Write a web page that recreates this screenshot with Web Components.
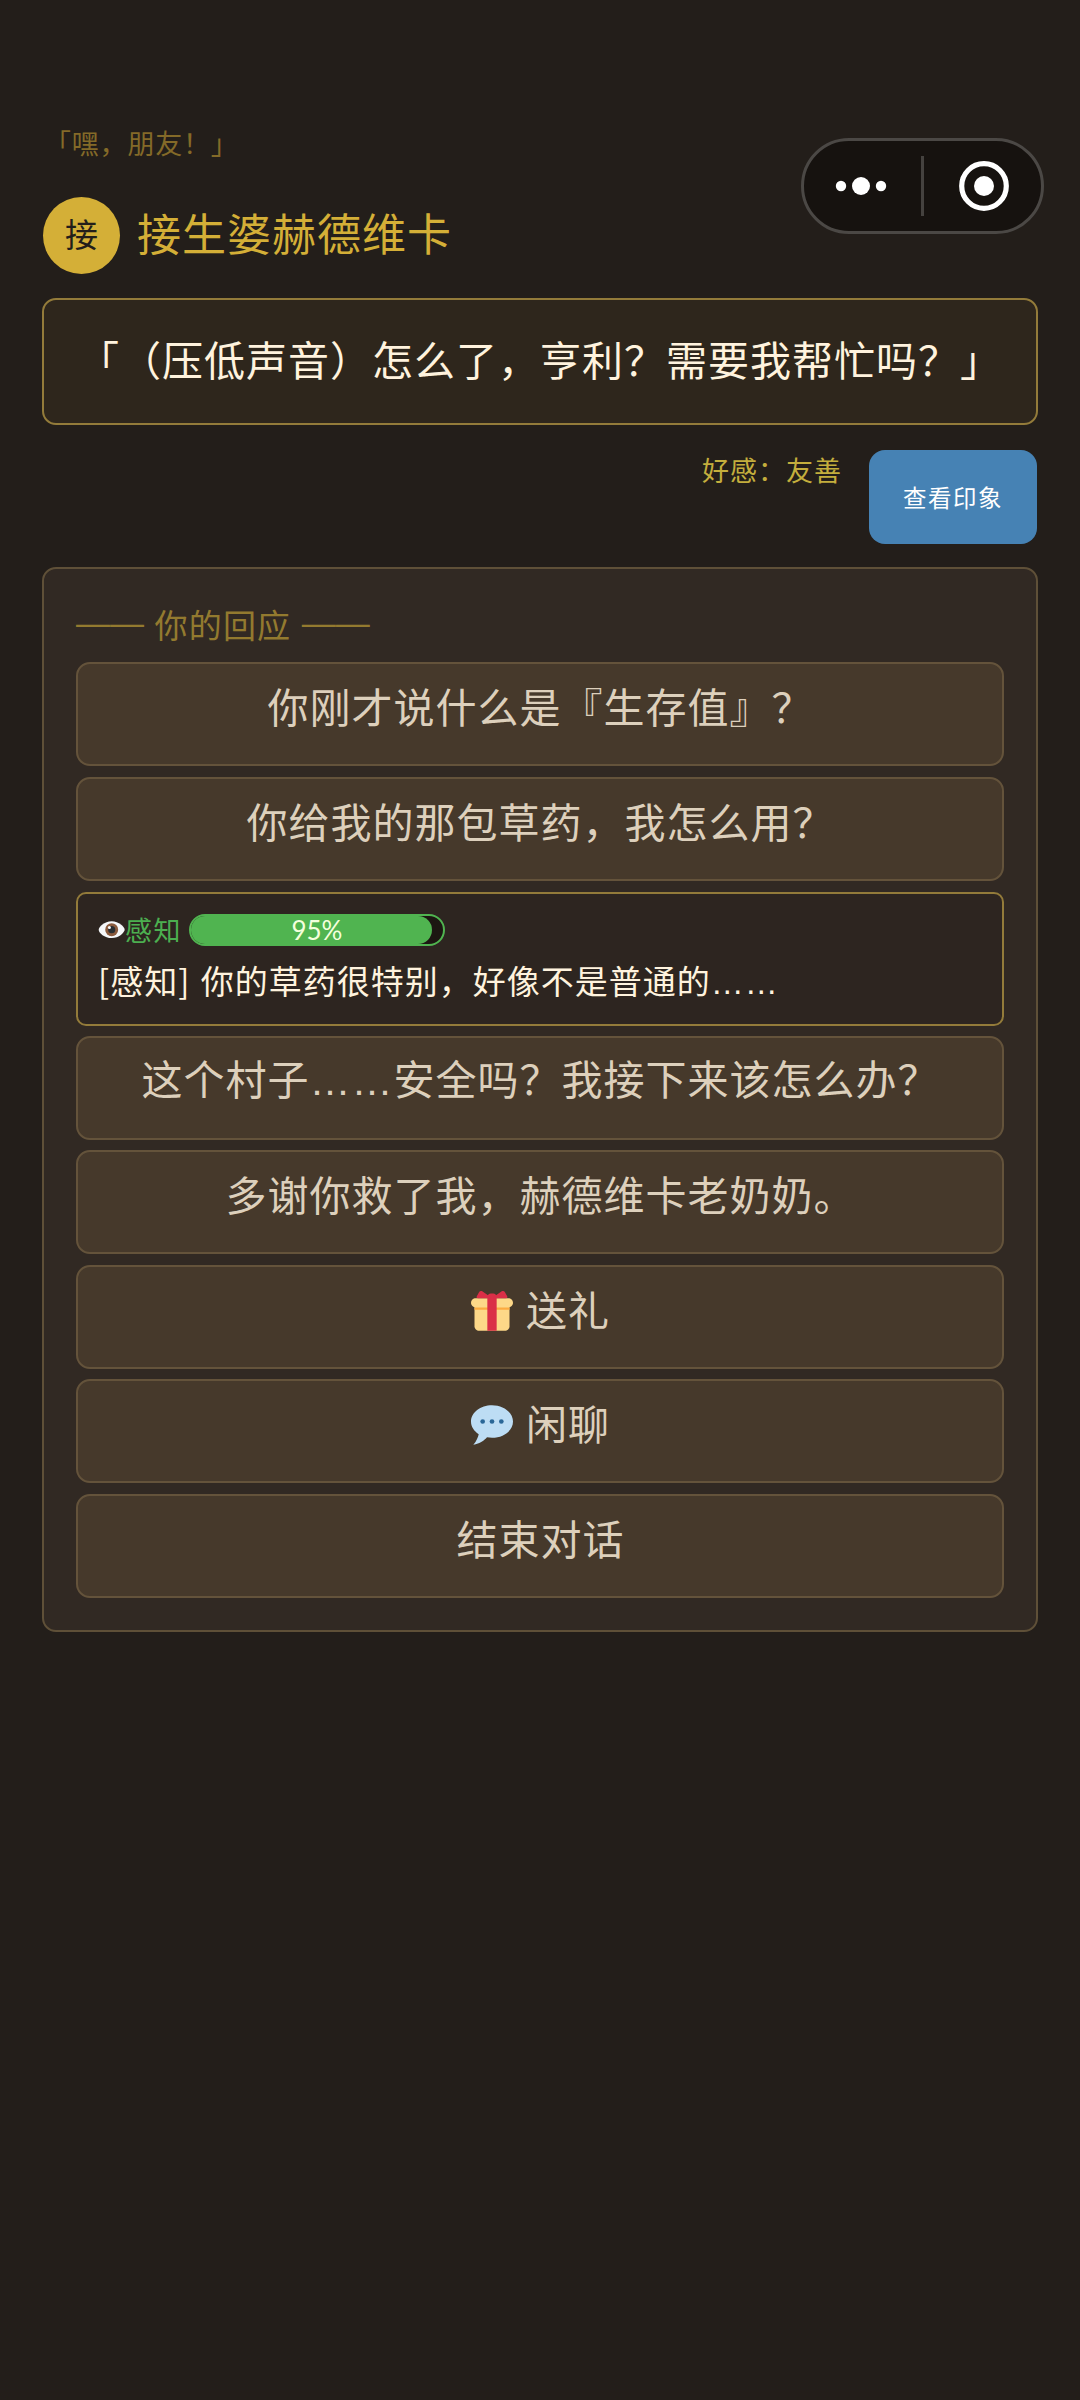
<!DOCTYPE html>
<html lang="zh-CN">
<head>
<meta charset="utf-8">
<title>对话</title>
<style>
html,body{margin:0;background:#231e1a}
body{width:1080px;height:2400px;overflow:hidden;font-family:"Noto Sans CJK SC",sans-serif;letter-spacing:1px;text-spacing-trim:space-all;color:#ddd0bc}
</style>
</head>
<body>
<dialogue-screen></dialogue-screen>
<script>
const define = (name, html) => customElements.define(name, class extends HTMLElement {
  constructor() {
    super();
    const t = document.createElement('template');
    t.innerHTML = html;
    this.attachShadow({mode: 'open'}).append(t.content.cloneNode(true));
  }
});

define('menu-capsule', `<style>
:host{display:flex;box-sizing:border-box;width:243px;height:96px;border:3px solid #4b4845;border-radius:48px;background:#16120f;overflow:hidden}
svg{display:block}
</style>
<svg width="237" height="90" viewBox="804 141 237 90" fill="#fff">
<circle cx="841" cy="186" r="5.2"/><circle cx="861" cy="186" r="9"/><circle cx="881" cy="186" r="5.2"/>
<rect x="921" y="156" width="3" height="60" fill="#45423f"/>
<circle cx="984" cy="186" r="22.3" fill="none" stroke="#fff" stroke-width="5.2"/><circle cx="984" cy="186" r="10"/>
</svg>`);

define('npc-header', `<style>
:host{display:flex;align-items:center;gap:17px;height:77px;margin-left:1px}
.avatar{box-sizing:border-box;width:77px;height:77px;padding-bottom:4px;border-radius:50%;background:#d4af37;color:#231e1a;font-size:33px;letter-spacing:0;display:flex;align-items:center;justify-content:center;line-height:1}
.name{color:#d4af37;font-size:44px;letter-spacing:1px;line-height:60px;padding-bottom:8px}
</style>
<div class="avatar"><slot name="avatar"></slot></div><div class="name"><slot></slot></div>`);

define('speech-box', `<style>
:host{display:flex;box-sizing:border-box;height:127px;padding-bottom:7px;align-items:center;justify-content:center;border:2px solid #937b3a;border-radius:14px;background:#2e261c;color:#fff3de;font-size:41px;white-space:nowrap;line-height:60px}
</style><slot></slot>`);

define('relation-row', `<style>
:host{display:flex;justify-content:flex-end;align-items:flex-start;gap:27px;padding-right:1px;height:94px}
.rel{color:#c4ae3d;font-size:27px;line-height:39px}
button{all:unset;box-sizing:border-box;width:168px;height:94px;border-radius:16px;background:#4682b4;color:#fff;font-size:23.5px;text-align:center;line-height:86px;letter-spacing:1.5px}
</style><div class="rel"><slot></slot></div><button><slot name="action"></slot></button>`);

define('reply-panel', `<style>
:host{display:flex;flex-direction:column;box-sizing:border-box;height:1065px;padding:32px;border:2px solid #5f5038;border-radius:14px;background:#312923}
.title{height:61px;line-height:46px;font-size:33px;letter-spacing:1.2px;color:#937a2f;display:flex;gap:10.5px}
.dash{letter-spacing:0;font-size:34px;line-height:43px;font-family:"Liberation Sans",sans-serif}
.list{display:flex;flex-direction:column;gap:10px}
</style><div class="title"><span class="dash">——</span><span>你的回应</span><span class="dash">——</span></div><div class="list"><slot></slot></div>`);

define('reply-option', `<style>
:host{display:flex;box-sizing:border-box;height:104px;padding:0 0 12px 1px;align-items:center;justify-content:center;border:2px solid #64533b;border-radius:14px;background:#46392b;color:#ddd0bc;font-size:41px;line-height:60px}
:host([wide]){margin-top:1px}
.t{white-space:pre;margin-top:-6px}
::slotted(svg){display:block;margin-right:13px}
</style><slot name="icon"></slot><span class="t"><slot></slot></span>`);

define('skill-check', `<style>
:host{display:flex;flex-direction:column;box-sizing:border-box;height:134px;margin-top:1px;padding:20px 20px 0;border:2px solid #937b3a;border-radius:10px;background:#2d2520;color:#fff3de}
.row{display:flex;align-items:center;height:32px}
svg{width:27.4px;height:27.4px;margin-left:-.5px}
.label{color:#4caf50;font-size:27px;letter-spacing:1.5px;line-height:32px;width:64px}
.bar{box-sizing:border-box;width:256px;height:32px;border:2px solid #50b450;border-radius:16px;background:#1c1712;display:grid;overflow:hidden}
.fill,.pct{grid-area:1/1}
.fill{width:241px;border-radius:0 14px 14px 0;background:#50b450}
.pct{text-align:center;font-family:Lato,sans-serif;font-size:26px;line-height:28px;letter-spacing:0;color:#f4ffdc}
.text{font-size:33px;line-height:48px;margin-top:10px;white-space:nowrap;word-spacing:2px}
</style>
<div class="row">
<svg viewBox="0 0 36 36"><path fill="#F5F8FA" d="M35.059 18c0 3.304-7.642 11-17.067 11C8.566 29 .925 22.249.925 18c0-3.314 7.34-11 17.067-11 9.426 0 17.067 7.686 17.067 11z"/><circle cx="18" cy="18" r="8.5" fill="#8A5B3E"/><circle cx="18" cy="18" r="4.7" fill="#292F33"/><circle cx="15" cy="15" r="2" fill="#F5F8FA"/></svg>
<span class="label"><slot name="skill"></slot></span>
<div class="bar"><div class="fill"></div><div class="pct"><slot name="chance"></slot></div></div>
</div>
<div class="text"><slot></slot></div>`);

define('dialogue-screen', `<style>
:host{display:block;position:relative;box-sizing:border-box;width:1080px;height:2400px;padding:124px 42px 0}
.greet{height:73px;line-height:37px;font-size:27px;letter-spacing:.8px;color:#846a28;margin-left:2px}
.el{font-family:"Liberation Sans",sans-serif}
speech-box{margin-top:24px}
relation-row{margin-top:25px}
reply-panel{margin-top:23px}
menu-capsule{position:absolute;left:801px;top:138px}
</style>
<div class="greet">「嘿，朋友！」</div>
<npc-header><span slot="avatar">接</span>接生婆赫德维卡</npc-header>
<speech-box>「（压低声音）怎么了，亨利？需要我帮忙吗？」</speech-box>
<relation-row>好感：友善<span slot="action">查看印象</span></relation-row>
<reply-panel>
<reply-option>你刚才说什么是『生存值』？</reply-option>
<reply-option wide>你给我的那包草药，我怎么用？</reply-option>
<skill-check><span slot="skill">感知</span><span slot="chance">95%</span>[感知] 你的草药很特别，好像不是普通的<span class="el">……</span></skill-check>
<reply-option>这个村子<span class="el">……</span>安全吗？我接下来该怎么办？</reply-option>
<reply-option>多谢你救了我，赫德维卡老奶奶。</reply-option>
<reply-option wide><svg slot="icon" width="42" height="42" viewBox="0 0 36 36"><path fill="#FDD888" d="M33 31c0 2.2-1.8 4-4 4H7c-2.2 0-4-1.8-4-4V14c0-2.2 1.8-4 4-4h22c2.2 0 4 1.8 4 4v17z"/><path fill="#FDD888" d="M36 11c0 2.2-1.8 4-4 4H4c-2.2 0-4-1.8-4-4s1.8-4 4-4h28c2.2 0 4 1.8 4 4z"/><path fill="#FCAB40" d="M3 15h30v2H3z"/><path fill="#DA2F47" d="M19 3h-2c-1.657 0-3 1.343-3 3v29h8V6c0-1.657-1.343-3-3-3z"/><path fill="#DA2F47" d="M16 7c1.1 0 1.263-.516.361-1.147L9.639 1.147c-.902-.631-2.085-.366-2.631.589L4.992 5.264C4.446 6.219 4.9 7 6 7h10zm4 0c-1.1 0-1.263-.516-.361-1.147l6.723-4.706c.901-.631 2.085-.366 2.631.589l2.016 3.527C31.554 6.219 31.1 7 30 7H20z"/></svg>送礼</reply-option>
<reply-option><svg slot="icon" width="42" height="42" viewBox="0 0 36 36"><path fill="#BDDDF4" d="M18 1C8.059 1 0 7.268 0 15c0 4.368 2.574 8.268 6.604 10.835C6.08 28.144 4.859 31.569 2 35c5.758-.96 9.439-3.761 11.716-6.416 1.376.272 2.81.416 4.284.416 9.941 0 18-6.268 18-14S27.941 1 18 1z"/><g fill="#2A6797"><circle cx="10" cy="15" r="2"/><circle cx="18" cy="15" r="2"/><circle cx="26" cy="15" r="2"/></g></svg>闲聊</reply-option>
<reply-option wide>结束对话</reply-option>
</reply-panel>
<menu-capsule></menu-capsule>`);
</script>
</body>
</html>
